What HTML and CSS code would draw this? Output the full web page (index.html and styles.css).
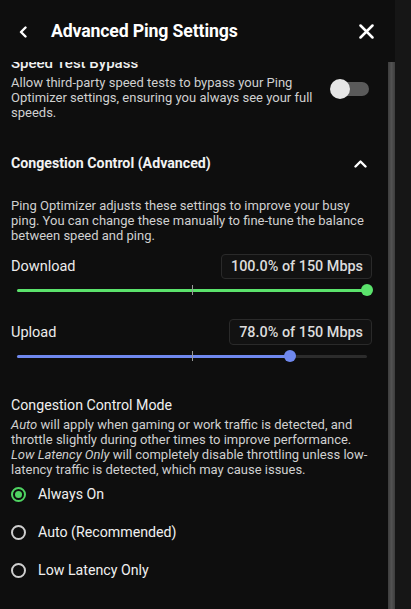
FILE: index.html
```html
<!DOCTYPE html>
<html lang="en">
<head>
<meta charset="utf-8">
<title>Advanced Ping Settings</title>
<link rel="stylesheet" href="styles.css">
</head>
<body>
<div class="panel">
  <header class="header">
    <button class="icon-btn back" aria-label="Back">
      <svg width="10" height="12" viewBox="0 0 10 12"><path d="M7.5 1.5 L3 6 L7.5 10.5" fill="none" stroke="#fff" stroke-width="2.4" stroke-linecap="round" stroke-linejoin="round"/></svg>
    </button>
    <h1 class="title">Advanced Ping Settings</h1>
    <button class="icon-btn close" aria-label="Close">
      <svg width="15" height="15" viewBox="0 0 15 15"><path d="M1.5 1.5 L13.5 13.5 M13.5 1.5 L1.5 13.5" fill="none" stroke="#fff" stroke-width="2.5" stroke-linecap="round"/></svg>
    </button>
  </header>
  <div class="body">
    <div class="scroll">
      <div class="content">
        <section class="bypass">
          <h2 class="setting-title">Speed Test Bypass</h2>
          <div class="setting-row">
            <p class="desc bypass-desc">Allow third-party speed tests to bypass your Ping Optimizer settings, ensuring you always see your full speeds.</p>
            <div class="toggle"><span class="knob"></span></div>
          </div>
        </section>

        <div class="group-header">
          <h2 class="group-title">Congestion Control (Advanced)</h2>
          <svg class="chev-up" width="13" height="9" viewBox="0 0 13 9"><path d="M1.5 7.5 L6.5 2.5 L11.5 7.5" fill="none" stroke="#fff" stroke-width="2.4" stroke-linecap="round" stroke-linejoin="round"/></svg>
        </div>

        <p class="desc group-desc">Ping Optimizer adjusts these settings to improve your busy ping. You can change these manually to fine-tune the balance between speed and ping.</p>

        <div class="value-row">
          <span class="label">Download</span>
          <span class="value-box">100.0% of 150 Mbps</span>
        </div>
        <div class="slider green">
          <div class="track">
            <div class="fill" style="width:100%"></div>
            <span class="tick"></span>
            <span class="thumb" style="left:100%"></span>
          </div>
        </div>

        <div class="value-row upload">
          <span class="label">Upload</span>
          <span class="value-box">78.0% of 150 Mbps</span>
        </div>
        <div class="slider blue">
          <div class="track">
            <div class="fill" style="width:78%"></div>
            <span class="tick"></span>
            <span class="thumb" style="left:78%"></span>
          </div>
        </div>

        <h3 class="mode-title">Congestion Control Mode</h3>
        <p class="desc mode-desc"><em>Auto</em> will apply when gaming or work traffic is detected, and throttle slightly during other times to improve performance. <em>Low Latency Only</em> will completely disable throttling unless low-latency traffic is detected, which may cause issues.</p>

        <div class="radios">
          <label class="radio checked"><span class="circle"></span><span class="radio-label">Always On</span></label>
          <label class="radio"><span class="circle"></span><span class="radio-label">Auto (Recommended)</span></label>
          <label class="radio"><span class="circle"></span><span class="radio-label">Low Latency Only</span></label>
        </div>
      </div>
    </div>
    <div class="scrollbar"></div>
  </div>
</div>
</body>
</html>
```

FILE: styles.css
```css
* { box-sizing: border-box; }
html, body {
  margin: 0;
  padding: 0;
  height: 100%;
}
body {
  background: #161616;
  font-family: Roboto, "Liberation Sans", Arial, sans-serif;
  color: #ececec;
  overflow: hidden;
}
.panel {
  width: 395px;
  height: 609px;
  background: #0e0e0e;
  display: flex;
  flex-direction: column;
}
.header {
  height: 62px;
  flex: 0 0 62px;
  display: flex;
  align-items: center;
  padding: 0 21px 0 16px;
}
.icon-btn {
  background: none;
  border: 0;
  padding: 0;
  display: flex;
  align-items: center;
  justify-content: center;
  cursor: pointer;
}
.back { width: 14px; height: 20px; margin-top: 1px; }
.title {
  margin: 0 0 0 21px;
  font-size: 17.7px;
  font-weight: 700;
  color: #fff;
  flex: 1;
  letter-spacing: -0.15px;
}
.close { width: 15px; height: 15px; margin-top: 1px; }

.body {
  flex: 1;
  display: flex;
  min-height: 0;
}
.scroll {
  flex: 1;
  overflow: hidden;
}
.scrollbar {
  width: 7px;
  flex: 0 0 7px;
  background: linear-gradient(to right, #3d3d3d, #525252 50%, #3d3d3d);
}
.content {
  padding: 0 16px 0 11px;
  margin-top: -8px;
}
.desc {
  margin: 0;
  font-size: 13px;
  line-height: 15px;
  color: #d0d0d0;
}
.desc em { font-style: italic; }

.setting-title {
  margin: 0;
  font-size: 15px;
  line-height: 18px;
  font-weight: 500;
  color: #f0f0f0;
}
.setting-row {
  display: flex;
  align-items: flex-start;
  margin-top: 3px;
}
.bypass-desc { width: 312px; }
.toggle {
  position: relative;
  width: 38px;
  height: 14px;
  margin: 7px 0 0 8px;
  border-radius: 7px;
  background: #5a5a5a;
}
.knob {
  position: absolute;
  left: -1px;
  top: -3px;
  width: 20px;
  height: 20px;
  border-radius: 50%;
  background: #e6e6e6;
}

.group-header {
  margin-top: 21px;
  height: 44px;
  display: flex;
  align-items: center;
  justify-content: space-between;
  padding-right: 5px;
}
.group-title {
  margin: 0;
  font-size: 14.2px;
  font-weight: 700;
  color: #f2f2f2;
}
.group-desc { margin-top: 13px; }

.value-row {
  display: flex;
  align-items: center;
  justify-content: space-between;
  margin-top: 11px;
  height: 25px;
}
.value-row.upload { margin-top: 23px; height: 26px; }
.label {
  font-size: 14.5px;
  color: #ececec;
}
.value-box {
  height: 100%;
  display: flex;
  align-items: center;
  padding: 0 8px 0 9px;
  border: 1px solid #2a2a2a;
  border-radius: 4px;
  background: #121212;
  font-size: 14.4px;
  font-weight: 500;
  color: #dcdcdc;
}
.slider {
  margin-top: 5px;
  height: 12px;
  padding: 0 5px 0 6px;
  display: flex;
  align-items: center;
}
.track {
  position: relative;
  flex: 1;
  height: 3px;
  background: #2c2c2c;
  border-radius: 2px;
}
.fill {
  height: 100%;
  border-radius: 2px;
}
.tick {
  position: absolute;
  left: 50%;
  top: -4px;
  width: 1px;
  height: 10px;
  background: #9a9a9a;
}
.thumb {
  position: absolute;
  top: 50%;
  width: 12px;
  height: 12px;
  margin: -6px 0 0 -6px;
  border-radius: 50%;
}
.green .fill, .green .thumb { background: #5be36c; }
.blue .fill, .blue .thumb { background: #6f88ee; }

.mode-title {
  margin: 34px 0 0;
  font-size: 14.2px;
  line-height: 18px;
  font-weight: 400;
  color: #f0f0f0;
}
.mode-desc { margin-top: 3px; }

.radios {
  display: flex;
  flex-direction: column;
  margin-top: -2px;
}
.radio {
  height: 38px;
  display: flex;
  align-items: center;
  gap: 12px;
  cursor: pointer;
}
.circle {
  width: 15px;
  height: 15px;
  border-radius: 50%;
  border: 2px solid #cfcfcf;
  display: flex;
  align-items: center;
  justify-content: center;
}
.radio.checked .circle { border-color: #4fd462; }
.radio.checked .circle::after {
  content: "";
  width: 7px;
  height: 7px;
  border-radius: 50%;
  background: #4fd462;
}
.radio-label {
  font-size: 14.2px;
  color: #f0f0f0;
}
```
